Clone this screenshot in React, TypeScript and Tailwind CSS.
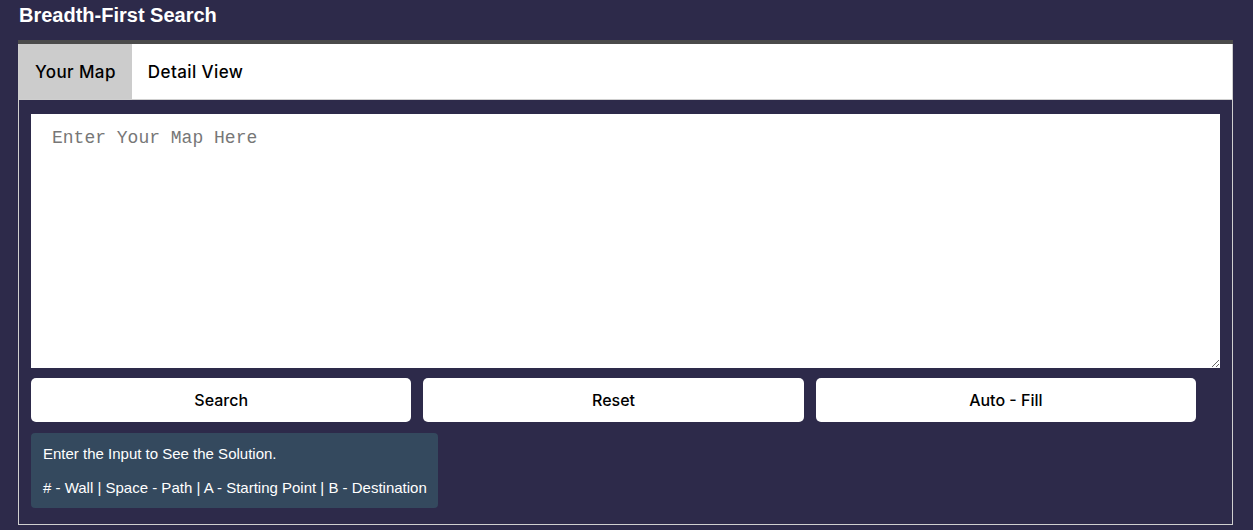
import React, { useState } from "react";

const tabs = ["Your Map", "Detail View"];
const actions = ["Search", "Reset", "Auto - Fill"];

export default function App() {
  const [active, setActive] = useState("Your Map");
  const [map, setMap] = useState("");

  return (
    <div className="min-h-[530px] bg-[#2d2a4a] px-[18px] pt-[5px] pb-[5px]">
      <h1 className="font-['Liberation_Sans',Arial,sans-serif] text-[20px] font-bold leading-[20px] text-white pl-px">
        Breadth-First Search
      </h1>

      <div className="mt-[15px] mr-[2px] border-t-4 border-[#4b4b4b]">
        <div className="flex h-[56px] border-x border-b border-[#cfcfcf] bg-white font-['Inter',sans-serif]">
          {tabs.map((t) => (
            <button
              key={t}
              onClick={() => setActive(t)}
              className={`px-4 pt-[3px] text-[17px] font-medium tracking-[0.4px] text-black ${
                active === t ? "bg-[#cccccc]" : "bg-white"
              }`}
            >
              {t}
            </button>
          ))}
        </div>

        <div className="border-x border-b border-[#cfcfcf] px-3 pt-[14px] pb-4">
          <textarea
            value={map}
            onChange={(e) => setMap(e.target.value)}
            placeholder="Enter Your Map Here"
            className="block h-[254px] w-full resize-y bg-white pl-[21px] pr-5 pt-[11px] pb-[10px] font-['Liberation_Mono',monospace] text-[18px] text-black placeholder:text-[#777] outline-none"
          />

          <div className="mt-[10px] flex gap-3 pr-6 font-['Inter',sans-serif]">
            {actions.map((a) => (
              <button
                key={a}
                className="h-[44px] flex-1 rounded-[5px] bg-white text-[16px] font-medium text-black"
              >
                {a}
              </button>
            ))}
          </div>

          <div className="mt-[11px] w-[407px] whitespace-nowrap rounded-[4px] bg-[#34495e] px-3 py-[11px] font-['Liberation_Sans',Arial,sans-serif] text-[15px] text-white">
            <p className="leading-[19px]">Enter the Input to See the Solution.</p>
            <p className="mt-[15px] leading-[19px]">
              # - Wall | Space - Path | A - Starting Point | B - Destination
            </p>
          </div>
        </div>
      </div>
    </div>
  );
}
